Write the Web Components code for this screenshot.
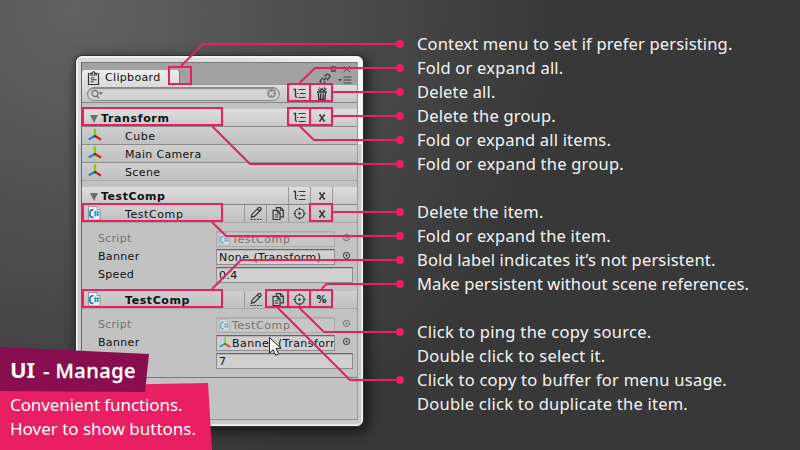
<!DOCTYPE html>
<html lang="en">
<head>
<meta charset="utf-8">
<title>UI - Manage</title>
<style>
html,body{margin:0;width:800px;height:450px;overflow:hidden}
body{background:#383838}
</style>
</head>
<body>
<manage-slide></manage-slide>
<script>
const define = (name, html, setup) => {
  const t = document.createElement('template');
  t.innerHTML = html;
  customElements.define(name, class extends HTMLElement {
    constructor() {
      super();
      this.attachShadow({mode: 'open'}).append(t.content.cloneNode(true));
    }
    connectedCallback() { if (setup) setup(this, this.shadowRoot); }
  });
};

/* Text line whose letter spacing is set so that it spans the width in "w". */
define('fit-text', `<style>
:host{display:inline-block;white-space:pre;flex:none}
span{display:inline-block}
</style><span><slot></slot></span>`, (el, root) => {
  const w = +el.getAttribute('w');
  if (!w) return;
  const s = root.querySelector('span');
  s.style.letterSpacing = '0';
  const n = el.textContent.length;
  s.style.letterSpacing = ((w - s.getBoundingClientRect().width) / n).toFixed(3) + 'px';
});

const icons = {
  axes: `<path d="M8 9V1.5" stroke="#88cc12" stroke-width="2.4"/><path d="M8 9l6 3.6" stroke="#cf1a1a" stroke-width="2.2"/><path d="M8 9l-6.3 3.4" stroke="#1683c4" stroke-width="2.2"/><path d="M8 8v2" stroke="#333" stroke-width="1.4"/>`,
  script: `<path d="M1.500 1.500h8.500l3 3v10.500h-11.500z" fill="#eef4f7" stroke="#8b969c"/><path d="M10 1.500v3h3" fill="#fff" stroke="#8b969c"/><path d="M6.500 5C3.500 4.200 2.900 6.300 2.900 8.700s.7 4.200 3.600 3.600" fill="none" stroke="#137cb1" stroke-width="1.7"/><path d="M8.300 5.800v5.600M10.700 5.800v5.600M6.800 7.400h5.400M6.800 9.800h5.400" stroke="#137cb1" stroke-width=".9"/>`,
  list: `<path d="M1.500 3.500h2v6.800q0 1 1.500 1" fill="none" stroke="#333" stroke-width="1.300"/><path d="M6.500 3.500h7M8 7.500h5.500M6.500 11.500h7M5 7.500h1.300" stroke="#3a3a3a" stroke-width="1.200"/>`,
  trash: `<path d="M4.200 7l.6 6.400h6.100l.6-6.400" fill="#bbb" stroke="#333" stroke-width="1.300"/><path d="M6.600 7.500v5.500M9.100 7.500v5.500" stroke="#333" stroke-width="1.300"/><path d="M3 6h10" stroke="#333" stroke-width="1.500"/><path d="M4 3l2.200 2.500L8.400 2.600 10 5.300l2.300-2.600M5.300 1.500l2 2.500M10 1.200l1.500 2.500" fill="none" stroke="#333" stroke-width="1.100"/>`,
  x: `<path d="M5.600 4.800l4.900 6.400M10.500 4.800l-4.900 6.400" stroke="#333" stroke-width="1.4"/><path d="M5 4.900h2M9.300 4.900h1.800M5 11.100h1.800M9.300 11.100h1.800" stroke="#333" stroke-width=".8"/>`,
  edit: `<path d="M3.300 11.200l.8-3 6.200-6.300q1.300-1 2.300.1t0 2.300L6.400 10.400zM9.300 3l2.200 2.200" fill="none" stroke="#333" stroke-width="1.2"/><path d="M2.500 13.500h11" stroke="#333" stroke-width="1.2" stroke-dasharray="2 1.200"/>`,
  copy: `<path d="M6.400 3.500V1.600h4.300l2.600 2.600v6.700h-2.600" fill="none" stroke="#333" stroke-width="1.2"/><path d="M3.100 4.300h4.500l2.500 2.500v6.700h-7z" fill="#cacaca" stroke="#333" stroke-width="1.2"/><path d="M7.300 4.500v2.700h2.600M10.400 1.800v2.700H13M4.800 8.900h3.500M4.800 11.100h3.500" fill="none" stroke="#333"/>`,
  target: `<circle cx="7.500" cy="7.500" r="4.700" fill="none" stroke="#3c3c3c" stroke-width="1.1"/><circle cx="7.500" cy="7.500" r="1.300" fill="#333"/><path d="M7.500 1.500v2.200M7.500 11.300v2.200M1.500 7.500h2.200M11.300 7.500h2.200" stroke="#333" stroke-width="1.2"/>`,
  clip: `<path d="M3.500 3.500h-1v11h10v-11h-1" fill="none" stroke="#333" stroke-width="1.2"/><path d="M4.800 5V3.400h1.500Q7.500-.2 8.800 3.400h1.500V5z" fill="none" stroke="#333" stroke-width="1.2"/><path d="M4.700 7.800h3.800M4.700 9.800h5.800M4.700 11.800h3" stroke="#333"/>`,
  pick: `<circle cx="7.500" cy="7.500" r="3.100" fill="none" stroke="#333" stroke-width="1"/><circle cx="7.500" cy="7.500" r=".9" fill="#222"/>`
};
define('u-icon', `<style>:host{display:block;width:16px;height:16px;flex:none}svg{display:block;width:100%;height:100%}</style><svg viewBox="0 0 16 16"></svg>`,
  (el, root) => { root.querySelector('svg').innerHTML = icons[el.getAttribute('name')]; });

define('tool-button', `<style>
:host{display:flex;width:21px;height:100%;border-left:1px solid #999;align-items:center;justify-content:center;flex:none;font:bold 10px "DejaVu Sans",sans-serif;color:#222}
</style><slot></slot>`);

define('group-header', `<style>
:host{display:flex;height:17px;border-bottom:1px solid #858585;background:linear-gradient(#dedede,#c9c9c9);align-items:center;font-weight:bold}
i{width:0;height:0;border:4.5px solid transparent;border-top:8px solid #6d6d6d;border-bottom:0;margin:2px 3px 0 7.500px;flex:none}
.t{flex:1;padding:1px 0 0 .5px}
.b{display:flex;height:100%;margin-right:24px}
tool-button:last-child{border-right:1px solid #999;width:21px}
</style><i></i><div class="t"><slot></slot></div><div class="b"><tool-button><u-icon name="list"></u-icon></tool-button><tool-button><u-icon name="x"></u-icon></tool-button></div>`);

define('item-row', `<style>
:host{display:flex;height:17px;border-bottom:1px solid #8d8d8d;background:linear-gradient(#cfcfcf,#c0c0c0);align-items:center}
:host([last]){border-bottom-color:#a8a8a8}
u-icon{margin:-1px 0 0 5px}
.t{flex:1;padding:2px 0 0 22px}
.b{display:flex;height:100%;margin-right:25px}
</style><u-icon></u-icon><div class="t"><slot></slot></div><div class="b"><slot name="tools"></slot></div>`,
  (el, root) => {
    const i = root.querySelector('u-icon');
    i.setAttribute('name', el.getAttribute('icon'));
    i.shadowRoot.querySelector('svg').innerHTML = icons[el.getAttribute('icon')];
  });

define('field-row', `<style>
:host{display:flex;height:18px;align-items:flex-start;padding:0 4px 0 16px}
.l{width:118px;padding-top:2px;flex:none}
.f{box-sizing:border-box;height:16px;width:119px;margin-top:1px;border:1px solid #8e8e8e;border-top:1px solid #666;background:#d0d0d0;display:flex;align-items:center;padding:0 0 0 2px;overflow:hidden;box-shadow:inset 0 1px #b5b5b5;flex:none}
:host([wide]) .f{width:137px}
:host([wide]) .p{display:none}
.p{margin:0 0 0 4px}
:host([off]){color:#747474}
:host([off]) .f{border-color:#aaa;background:#c6c6c6}
:host([off]) .p{opacity:.6}
</style><div class="l"><slot name="label"></slot></div><div class="f"><slot></slot></div><u-icon class="p" name="pick"></u-icon>`);

define('clip-window', `<style>
:host{display:block;box-sizing:border-box;width:287px;height:370px;padding:5px;border-radius:6px;border:1px solid #f4f4f4;
 background:linear-gradient(90deg,#d9d9d9 0,#dedede 60%,#f6f6f6 100%) 0 0/100% 87px no-repeat,#c9c9c9;
 box-shadow:0 0 0 1px #303030,3px 4px 12px 3px rgba(0,0,0,.55),inset 0 0 0 1px rgba(255,255,255,.5);
 font:11px/13px "DejaVu Sans",sans-serif;color:#111}
.in{box-sizing:border-box;width:275px;height:358px;background:#c2c2c2;border:1px solid #8f8f8f;border-width:1px 0 1px 0;box-shadow:-1px 0 #666,1px 0 #999;display:flex;flex-direction:column}
.title{height:21px;background:#a2a2a2;border-top:1px solid #777;margin-top:-1px;display:flex;align-items:flex-end;justify-content:space-between}
.tab{width:98px;height:15px;background:linear-gradient(#ededed,#dcdcdc);border-radius:3px 3px 0 0;border-right:1px solid #777;display:flex;align-items:center;gap:3px;box-sizing:border-box;padding-left:4px;margin-bottom:-1px;position:relative}
.bar{height:17px;border-bottom:1px solid #858585;border-top:1px solid #9c9c9c;background:linear-gradient(#dcdcdc,#c6c6c6);display:flex;align-items:center;padding-left:5px}
.search{box-sizing:border-box;width:193px;height:14px;border-radius:8px;border:1px solid #888;box-shadow:inset 0 1px 1px #888;background:#d4d4d4}
.search svg{display:block}
.bar .first{margin-left:8px}
.gap{height:6px;border:0}
.pad{height:7px;flex:none}
.end{border-top:1px solid #777;margin-top:7px}
fit-text{flex:none}
field-row u-icon.s{width:14px;height:14px;margin-left:-1px;opacity:.4}
field-row u-icon.a{width:14px;height:14px;margin-left:-1px;opacity:.75}
</style>
<div class="in">
 <div class="title">
  <div class="tab"><u-icon name="clip"></u-icon><fit-text w="55.500">Clipboard</fit-text></div>
  <svg width="38" height="22" viewBox="0 0 38 22" style="margin-right:3px;margin-bottom:-1px" fill="none" stroke="#444"><path d="M15.500 4h3.500v4h-3.500z" stroke-width="1.3"/><path d="M27.500 3l6.500 6M34 3l-6.500 6"/><path d="M27.500 14h8M27.500 17h8M27.500 20h8"/><path d="M22 16h4l-2 2.500z" fill="#444" stroke="none"/><g transform="translate(9 16) rotate(-45)" stroke-width="1.4"><path d="M-.5-2.200H-3.500a2.200 2.200 0 0 0 0 4.400h2M.5 2.200H3.500a2.200 2.200 0 0 0 0-4.400H1.500M-2.200 0h4.400"/></g></svg>
 </div>
 <div class="bar">
  <div class="search"><svg width="191" height="12" viewBox="0 0 191 12"><circle cx="7" cy="5.5" r="3" fill="none" stroke="#777" stroke-width="1.3"/><path d="M9 8l2 2.4" stroke="#777" stroke-width="1.4"/><path d="M10.500 4h4.500l-2.200 3z" fill="#777"/><circle cx="183.500" cy="5.500" r="4.6" fill="#909090"/><path d="M181.500 3.500l4 4M185.500 3.500l-4 4" stroke="#ddd" stroke-width="1.3"/></svg></div>
  <tool-button class="first"><u-icon name="list"></u-icon></tool-button><tool-button><u-icon name="trash"></u-icon></tool-button>
 </div>
 <div class="gap"></div>
 <group-header><fit-text w="68.500">Transform</fit-text></group-header>
 <item-row icon="axes"><fit-text w="30.5">Cube</fit-text></item-row>
 <item-row icon="axes"><fit-text w="76.500">Main Camera</fit-text></item-row>
 <item-row icon="axes" last><fit-text w="35.5">Scene</fit-text></item-row>
 <div class="gap"></div>
 <group-header><fit-text w="64.500">TestComp</fit-text></group-header>
 <item-row icon="script" last><fit-text w="58.5">TestComp</fit-text>
  <tool-button slot="tools"><u-icon name="edit"></u-icon></tool-button><tool-button slot="tools"><u-icon name="copy"></u-icon></tool-button><tool-button slot="tools"><u-icon name="target"></u-icon></tool-button><tool-button slot="tools"><u-icon name="x"></u-icon></tool-button></item-row>
 <div class="pad"></div>
 <field-row off><fit-text slot="label" w="33.5">Script</fit-text><u-icon class="s" name="script"></u-icon><fit-text w="58.5">TestComp</fit-text></field-row>
 <field-row><fit-text slot="label" w="41.5">Banner</fit-text><fit-text w="102.500">None (Transform)</fit-text></field-row>
 <field-row wide><fit-text slot="label" w="36">Speed</fit-text><fit-text w="18.5">0.4</fit-text></field-row>
 <div class="pad"></div>
 <item-row icon="script" last><fit-text w="65" style="font-weight:bold">TestComp</fit-text>
  <tool-button slot="tools"><u-icon name="edit"></u-icon></tool-button><tool-button slot="tools"><u-icon name="copy"></u-icon></tool-button><tool-button slot="tools"><u-icon name="target"></u-icon></tool-button><tool-button slot="tools">%</tool-button></item-row>
 <div class="pad"></div>
 <field-row off><fit-text slot="label" w="33.5">Script</fit-text><u-icon class="s" name="script"></u-icon><fit-text w="58.5">TestComp</fit-text></field-row>
 <field-row><fit-text slot="label" w="41.5">Banner</fit-text><u-icon class="a" name="axes"></u-icon><fit-text w="114">Banner (Transform)</fit-text></field-row>
 <field-row wide><fit-text w="7">7</fit-text></field-row>
 <div class="end"></div>
</div>`);

/* Pink frames, leader lines and their end dots. */
define('callout-lines', `<style>:host{display:block;width:800px;height:450px}svg{display:block}</style>
<svg width="800" height="450" fill="none" stroke="#e91e63" stroke-width="2"></svg>`, (el, root) => {
  const boxes = [[168,66,24],[287,83,24],[309,83,24],[82,107,141],[287,107,24],[309,107,24],[82,203,141],[309,203,24],[82,289,141],[265,289,24],[287,289,24],[309,289,24]];
  const lines = ['181 66L203 44','299.5 83L315 68','333 92','333 116','299.5 126L314 140','212 126L250 164','333 212','212 222L226 236','212 289L241 260','321.5 289L326.5 284','299.5 308L324 332','278 308L350 380'];
  const ys = [44,68,92,116,140,164,212,236,260,284,332,380];
  root.querySelector('svg').innerHTML =
    boxes.map(([x,y,w]) => `<rect x="${x+1}" y="${y+1}" width="${w-2}" height="17"/>`).join('') +
    lines.map((l,i) => `<path d="M${l}L400 ${ys[i]}"/><circle cx="400" cy="${ys[i]}" r="4" fill="#e91e63" stroke="none"/>`).join('') +
    `<path d="M269.5 337.5v15.5l3.600-3.400 2.700 5.700 2.800-1.300-2.700-5.600h5z" fill="#fff" stroke="#223" stroke-width="1"/>`;
});

define('note-list', `<style>
:host{display:grid;grid-auto-rows:24px;align-items:center;font:16.500px/24px "Noto Sans","Open Sans",sans-serif;color:#f4f4f4}
</style><slot></slot>`);

define('slide-caption', `<style>
:host{display:block;width:212px;height:103px;color:#fff;font:17px/24px "Noto Sans","Open Sans",sans-serif}
.h{height:45px;width:149px;background:#880e4f;clip-path:polygon(0 0,149px 7px,145px 45px,0 44px);display:flex;align-items:baseline;box-sizing:border-box;padding:7px 0 0 10px;gap:8px;position:relative;z-index:1}
.b{height:67px;margin-top:-9px;background:#e91e63;clip-path:polygon(0 4px,208px 0,212px 67px,0 67px);box-sizing:border-box;padding:10px 0 0 10px;display:grid;grid-auto-rows:24px}
b{font-size:22px;line-height:30px}
.m{font-size:20px;font-weight:500;line-height:30px;-webkit-text-stroke:.3px #fff}
</style><div class="h"><b><fit-text w="25">UI</fit-text></b><span class="m"><fit-text w="93">- Manage</fit-text></span></div>
<div class="b"><fit-text w="172.500">Convenient functions.</fit-text><fit-text w="186">Hover to show buttons.</fit-text></div>`);

define('manage-slide', `<style>
:host{display:block;position:relative;width:800px;height:450px;overflow:hidden;background:radial-gradient(circle at 75px 10px,#626262 0,#383838 480px)}
.row{display:flex}
clip-window{margin:56px 54px 0 76px;flex:none}
note-list{margin-top:32px}
callout-lines,slide-caption{position:absolute;left:0;top:0}
slide-caption{top:347px}
</style>
<div class="row"><clip-window></clip-window>
<note-list>
<fit-text w="315.500">Context menu to set if prefer persisting.</fit-text>
<fit-text w="146.500">Fold or expand all.</fit-text>
<fit-text w="78.500">Delete all.</fit-text>
<fit-text w="139">Delete the group.</fit-text>
<fit-text w="194">Fold or expand all items.</fit-text>
<fit-text w="207">Fold or expand the group.</fit-text>
<span></span>
<fit-text w="126.500">Delete the item.</fit-text>
<fit-text w="194">Fold or expand the item.</fit-text>
<fit-text w="298.500">Bold label indicates it’s not persistent.</fit-text>
<fit-text w="332">Make persistent without scene references.</fit-text>
<span></span>
<fit-text w="234.500">Click to ping the copy source.</fit-text>
<fit-text w="188.500">Double click to select it.</fit-text>
<fit-text w="310">Click to copy to buffer for menu usage.</fit-text>
<fit-text w="271">Double click to duplicate the item.</fit-text>
</note-list></div>
<callout-lines></callout-lines><slide-caption></slide-caption>`);
</script>
</body>
</html>
